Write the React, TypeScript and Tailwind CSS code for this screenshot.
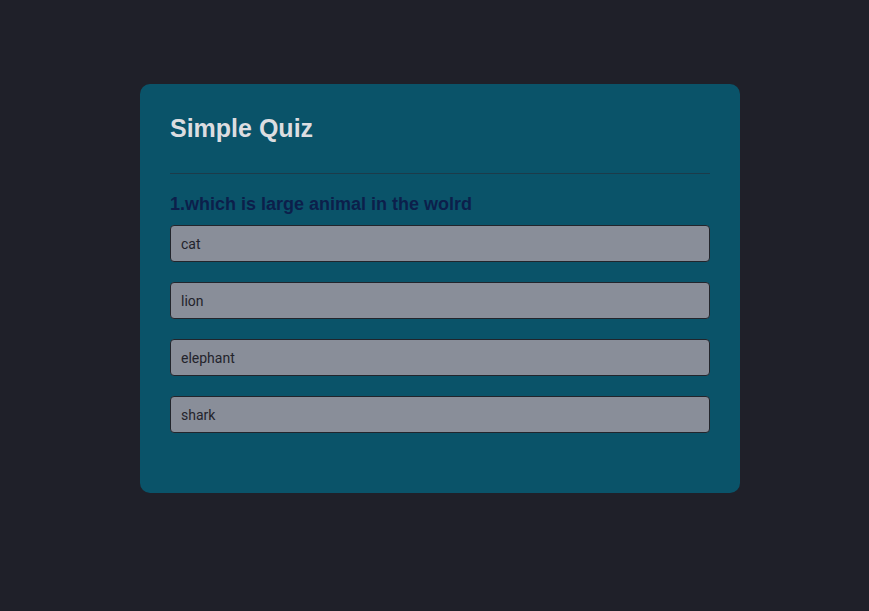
import React, { useState } from "react";

const options = ["cat", "lion", "elephant", "shark"];

export default function App() {
  const [selected, setSelected] = useState<number | null>(null);

  return (
    <div className="min-h-screen w-full bg-[#1f2029] pt-[84px] font-['Liberation_Sans',Arial,sans-serif]">
      <div className="ml-[140px] w-[600px] h-[409px] rounded-[10px] bg-[#0a5369] px-[30px] pt-[30px]">
        <h2 className="text-[25px] leading-[28px] font-bold text-[#dcdde0]">
          Simple Quiz
        </h2>
        <hr className="mt-[31px] border-0 h-px bg-[#1c3b4a]" />
        <h3 className="mt-[20px] text-[18px] leading-[21px] font-bold text-[#0c1f4b]">
          1.which is large animal in the wolrd
        </h3>
        <ul className="mt-[10px] flex flex-col gap-[20px]">
          {options.map((opt, i) => (
            <li
              key={opt}
              onClick={() => setSelected(i)}
              className={`h-[37px] flex items-center pl-[10px] pt-[1px] rounded-[4px] border border-[#22252c] text-[14px] text-[#23232b] cursor-pointer font-['Roboto',Arial,sans-serif] ${
                selected === i ? "bg-[#9aa0ab]" : "bg-[#898e99]"
              }`}
            >
              {opt}
            </li>
          ))}
        </ul>
      </div>
    </div>
  );
}
